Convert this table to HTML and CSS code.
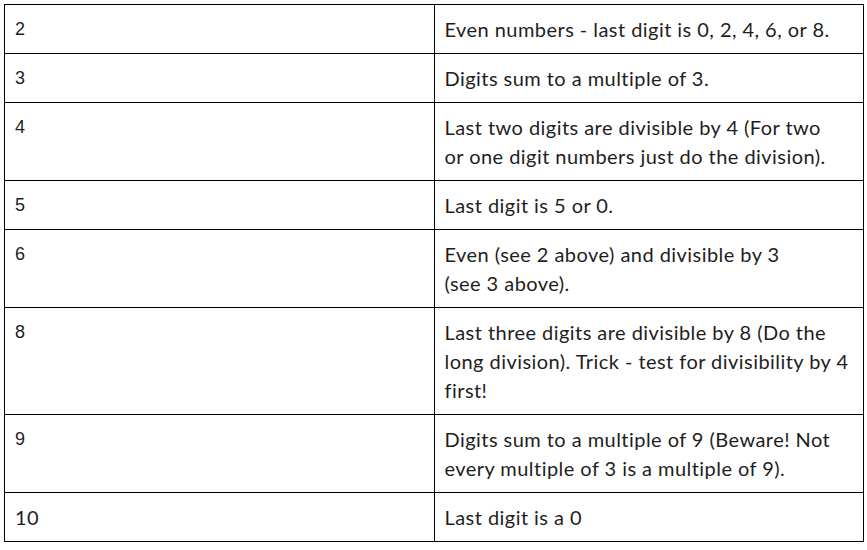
FILE: index.html
```html
<!DOCTYPE html>
<html>
<head>
<meta charset="utf-8">
<link rel="stylesheet" href="styles.css">
</head>
<body>
<table class="rules">
  <tr><td class="num">2</td><td class="desc">Even numbers - last digit is 0, 2, 4, 6, or 8.</td></tr>
  <tr><td class="num">3</td><td class="desc">Digits sum to a multiple of 3.</td></tr>
  <tr><td class="num">4</td><td class="desc">Last two digits are divisible by 4 (For two<br>or one digit numbers just do the division).</td></tr>
  <tr><td class="num">5</td><td class="desc">Last digit is 5 or 0.</td></tr>
  <tr><td class="num">6</td><td class="desc">Even (see 2 above) and divisible by 3<br>(see 3 above).</td></tr>
  <tr><td class="num">8</td><td class="desc">Last three digits are divisible by 8 (Do the<br>long division). Trick - test for divisibility by 4<br>first!</td></tr>
  <tr><td class="num">9</td><td class="desc">Digits sum to a multiple of 9 (Beware! Not<br>every multiple of 3 is a multiple of 9).</td></tr>
  <tr><td class="num alt">10</td><td class="desc">Last digit is a 0</td></tr>
</table>
</body>
</html>
```

FILE: styles.css
```css
html, body {
  margin: 0;
  background: #ffffff;
}
body {
  padding: 4px 0 0 4px;
}
.rules {
  border-collapse: collapse;
  width: 860px;
  table-layout: fixed;
  color: #1e1e1e;
}
.rules td {
  border: 1px solid #000;
  vertical-align: top;
  padding: 10px 9px 9px 10px;
  line-height: 29px;
  width: 50%;
  white-space: nowrap;
}
.num {
  font-family: "Liberation Sans", Arial, sans-serif;
  font-size: 18px;
}
.num.alt, .desc {
  font-family: "Lato", "Open Sans", sans-serif;
  font-size: 20px;
  letter-spacing: 0.45px;
}
```
